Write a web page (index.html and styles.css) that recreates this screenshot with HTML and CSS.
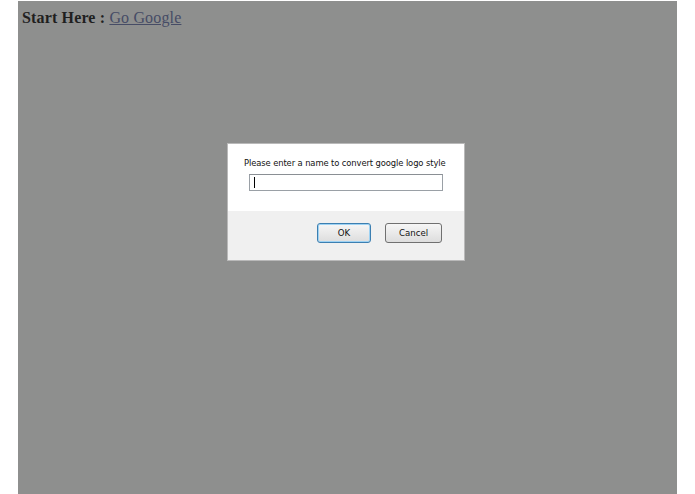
FILE: index.html
```html
<!DOCTYPE html>
<html>
<head>
<meta charset="utf-8">
<link rel="stylesheet" href="styles.css">
</head>
<body>
<div class="page">
  <h1 class="title">Start Here : <a class="link" href="#">Go Google</a></h1>
  <div class="dialog">
    <div class="dialog-body">
      <div class="prompt">Please enter a name to convert google logo style</div>
      <div class="input"><span class="caret"></span></div>
    </div>
    <div class="dialog-footer">
      <button class="btn btn-ok">OK</button>
      <button class="btn btn-cancel">Cancel</button>
    </div>
  </div>
</div>
</body>
</html>
```
FILE: styles.css
```css
html, body { margin: 0; padding: 0; background: #ffffff; }
body { width: 695px; height: 494px; overflow: hidden; }
.page {
  position: relative;
  margin: 1px 0 0 18px;
  width: 659px;
  height: 493px;
  background: #8e8f8e;
}
.title {
  margin: 0;
  padding: 8px 0 0 4px;
  font-family: "Liberation Serif", "Times New Roman", serif;
  font-size: 16px;
  font-weight: bold;
  color: #1f1f1f;
  line-height: 18px;
  letter-spacing: 0.15px;
}
.link {
  color: #464c66;
  font-weight: normal;
  text-decoration: underline;
}
.dialog {
  position: absolute;
  left: 209px;
  top: 142px;
  width: 236px;
  height: 116px;
  border: 1px solid #b9b9b9;
  background: #ffffff;
  display: flex;
  flex-direction: column;
}
.dialog-body {
  height: 67px;
  padding: 14px 0 0 16px;
  box-sizing: border-box;
}
.prompt {
  font-family: "DejaVu Sans", Tahoma, sans-serif;
  font-size: 8.4px;
  color: #111;
  letter-spacing: -0.1px;
  line-height: 10px;
  white-space: nowrap;
}
.input {
  margin: 6px 0 0 5px;
  width: 192px;
  height: 15px;
  border: 1px solid #9aa0a6;
  border-top-color: #8a8f94;
  background: #fff;
  display: flex;
  align-items: center;
}
.caret {
  margin-left: 4px;
  width: 1px;
  height: 11px;
  background: #000;
}
.dialog-footer {
  flex: 1;
  background: #f0f0f0;
  display: flex;
  justify-content: flex-end;
  align-items: flex-start;
  gap: 14px;
  padding: 12px 22px 0 0;
}
.btn {
  height: 20px;
  padding: 0;
  border: 1px solid #707070;
  border-radius: 3px;
  background: linear-gradient(#f6f6f6, #dddddd);
  font-family: "DejaVu Sans", Tahoma, sans-serif;
  font-size: 8.6px;
  color: #111;
}
.btn-ok {
  width: 54px;
  border-color: #3c7fb1;
  box-shadow: inset 0 0 0 1px #9ed2f3;
}
.btn-cancel {
  width: 57px;
}
```
